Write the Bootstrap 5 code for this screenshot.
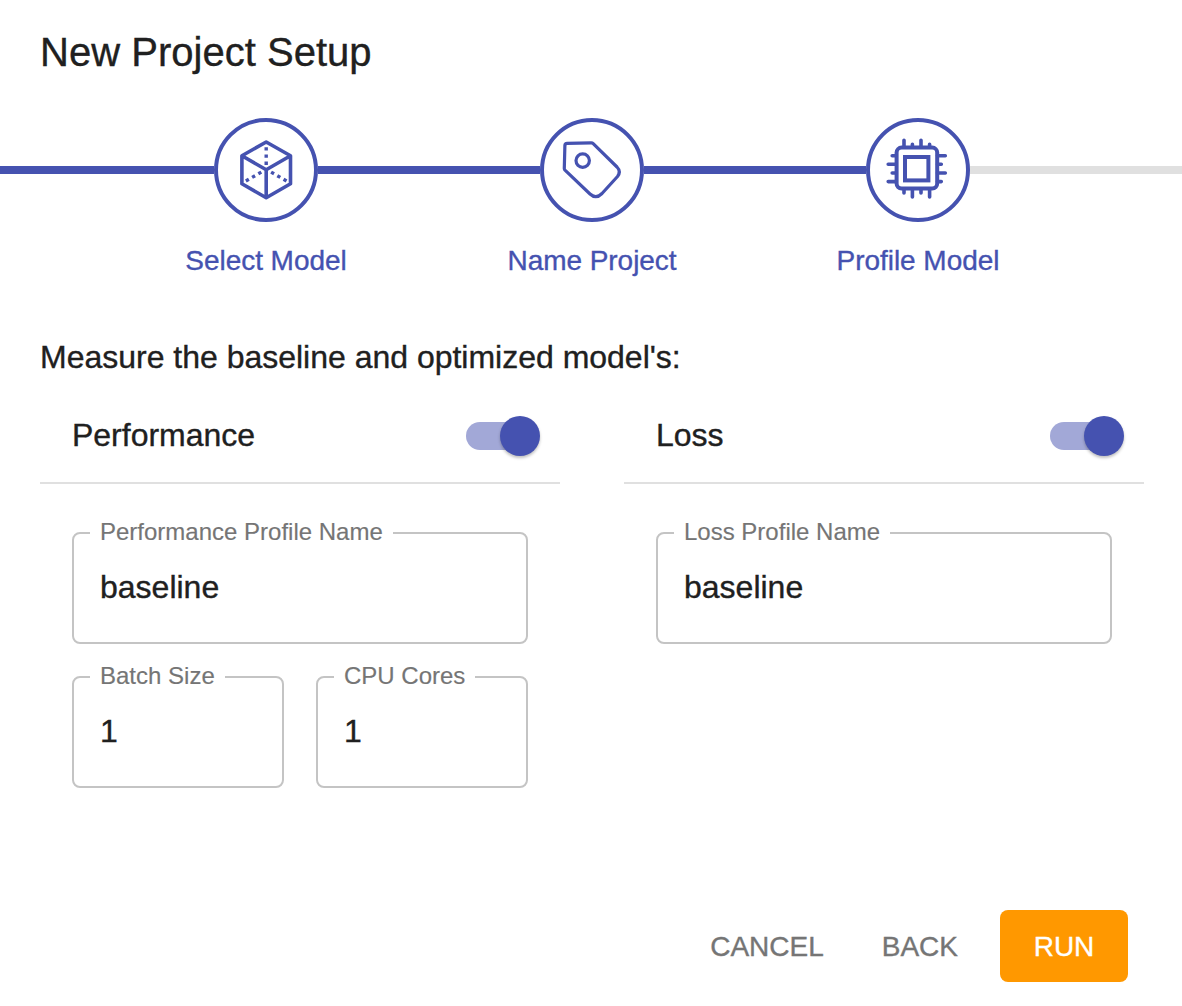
<!DOCTYPE html>
<html lang="en">
<head>
<meta charset="utf-8">
<meta name="viewport" content="width=device-width, initial-scale=1">
<title>New Project Setup</title>
<link href="https://cdn.jsdelivr.net/npm/bootstrap@5.3.0/dist/css/bootstrap.min.css" rel="stylesheet">
<style>
  :root { --indigo: #4552b0; }
  body { font-family: "Liberation Sans", Arial, sans-serif; color: #202020; font-size: 32px; line-height: 48px; letter-spacing: -.01px; overflow: hidden; -webkit-text-stroke: .35px currentColor; }
  .setup { height: 1006px; }
  .setup-title { font-size: 40px; line-height: 64px; letter-spacing: .02px; padding: 20px 40px 0; font-weight: 400; margin: 0; }
  .stepper { margin-top: 34px; }
  .track { height: 8px; background: var(--indigo); }
  .track-start { width: 214px; }
  .track-mid { width: 222px; }
  .track-rest { background: #e0e0e0; }
  .step-node { width: 104px; height: 104px; border: 4px solid var(--indigo); color: var(--indigo); }
  .step-node svg { width: 96px; height: 96px; display: block; fill: none; stroke: currentColor; }
  .step-labels { padding-left: 103px; margin-top: 19px; color: var(--indigo); font-size: 28px; line-height: 40px; letter-spacing: -.05px; }
  .step-labels > div { width: 326px; }
  .lead-in { margin: 52px 40px 0; line-height: 48px; }
  .panels { padding-left: 40px; gap: 64px; margin-top: 30px; }
  .panel { width: 520px; }
  .panel-head { height: 73px; padding: 0 20px 22px 32px; border-bottom: 2px solid #e0e0e0; }
  .panel-head > span { padding-bottom: 1px; }
  .switch-rail { width: 68px; height: 28px; border-radius: 14px; background: #a2a8d7; margin-right: 6px; }
  .switch-thumb { width: 40px; height: 40px; right: -6px; top: -6px; background: var(--indigo); box-shadow: 0 2px 3px rgba(0,0,0,.25); }
  .fields { padding: 48px 32px 0; gap: 32px; }
  .field-pair { gap: 32px; }
  .field { height: 112px; border: 2px solid #c4c4c4; border-radius: 8px; padding: 0 26px; }
  .field-name { top: -16px; left: 16px; padding: 0 10px; background: #fff; color: #757575; font-size: 24px; line-height: 28px; letter-spacing: 0; white-space: nowrap; -webkit-text-stroke-width: .15px; }
  .field-input { border: 0; outline: 0; padding: 0; width: 100%; height: 106px; background: transparent; color: #202020; letter-spacing: 0; -webkit-text-stroke: .35px currentColor; }
  .actions { padding: 0 54px 24px 0; gap: 26px; }
  .actions .btn { font-size: 28px; line-height: 48px; height: 72px; border: 0; border-radius: 8px; padding: 13px 16px 11px; color: #757575; letter-spacing: 0; }
  .actions .btn-run { background: #ff9800; color: #fff; width: 128px; }
</style>
</head>
<body>
<main class="setup d-flex flex-column bg-white">
  <h1 class="setup-title">New Project Setup</h1>

  <section class="stepper">
    <div class="d-flex align-items-center">
      <div class="track track-start"></div>
      <div class="step-node rounded-circle flex-shrink-0">
        <svg viewBox="0 0 96 96" stroke-width="3.6" stroke-linejoin="round">
          <path d="M48.200 20 72.500 33.800V61.800L48.200 75.800 23.900 61.800V33.800ZM23.900 33.800 48.200 47.800 72.500 33.800M48.200 47.800V75.800"/>
          <path d="M48.200 25.200V43M43.300 50.100 27 59.500M53.100 50.100 69.400 59.500" stroke-width="3.400" stroke-dasharray="3.400 3.800"/>
        </svg>
      </div>
      <div class="track track-mid"></div>
      <div class="step-node rounded-circle flex-shrink-0">
        <svg viewBox="0 0 96 96" stroke-width="3.2" stroke-linejoin="round">
          <path d="M23 21.300 47.200 20.800Q48.400 20.800 49.200 21.600L73 45Q77.300 49.500 73.500 54.500L58 71.500Q52 77.500 46 72L21 48.200Q20.300 47.500 20.300 46.400L20.900 23.300Q21 21.300 23 21.300Z"/>
          <circle cx="38.700" cy="38.600" r="6.700"/>
        </svg>
      </div>
      <div class="track track-mid"></div>
      <div class="step-node rounded-circle flex-shrink-0">
        <svg viewBox="0 0 96 96" stroke-width="4" stroke-linecap="round">
          <rect x="26.600" y="25.600" width="40.600" height="41" rx="5"/>
          <rect x="35" y="35" width="23.400" height="23.400"/>
          <path stroke-width="3.600" d="M34 25V18.200M42.400 25V22.200M51 25V18.200M59.600 25V22.200M34 67V71M42.400 67V75M51 67V71M59.600 67V75M26 33.700H22.200M26 42.300H18.200M26 51H22.200M26 59.600H18.200M67.500 33.700H75.300M67.500 42.300H71.300M67.500 51H75.300M67.500 59.600H71.300"/>
        </svg>
      </div>
      <div class="track track-rest flex-grow-1"></div>
    </div>
    <div class="step-labels d-flex text-center">
      <div>Select Model</div>
      <div>Name Project</div>
      <div>Profile Model</div>
    </div>
  </section>

  <p class="lead-in">Measure the baseline and optimized model's:</p>

  <div class="panels d-flex">
    <section class="panel">
      <div class="panel-head d-flex align-items-center justify-content-between">
        <span>Performance</span>
        <div class="switch-rail position-relative" role="switch" aria-checked="true"><div class="switch-thumb position-absolute rounded-circle"></div></div>
      </div>
      <div class="fields d-flex flex-column">
        <div class="field position-relative">
          <label class="field-name position-absolute" for="perf-name">Performance Profile Name</label>
          <input class="field-input" id="perf-name" value="baseline">
        </div>
        <div class="field-pair d-flex">
          <div class="field position-relative flex-fill">
            <label class="field-name position-absolute" for="batch">Batch Size</label>
            <input class="field-input" id="batch" value="1">
          </div>
          <div class="field position-relative flex-fill">
            <label class="field-name position-absolute" for="cores">CPU Cores</label>
            <input class="field-input" id="cores" value="1">
          </div>
        </div>
      </div>
    </section>
    <section class="panel">
      <div class="panel-head d-flex align-items-center justify-content-between">
        <span>Loss</span>
        <div class="switch-rail position-relative" role="switch" aria-checked="true"><div class="switch-thumb position-absolute rounded-circle"></div></div>
      </div>
      <div class="fields">
        <div class="field position-relative">
          <label class="field-name position-absolute" for="loss-name">Loss Profile Name</label>
          <input class="field-input" id="loss-name" value="baseline">
        </div>
      </div>
    </section>
  </div>

  <div class="actions d-flex justify-content-end mt-auto">
    <button class="btn" type="button">CANCEL</button>
    <button class="btn" type="button">BACK</button>
    <button class="btn btn-run" type="button">RUN</button>
  </div>
</main>
<script src="https://cdn.jsdelivr.net/npm/bootstrap@5.3.0/dist/js/bootstrap.bundle.min.js"></script>
</body>
</html>
